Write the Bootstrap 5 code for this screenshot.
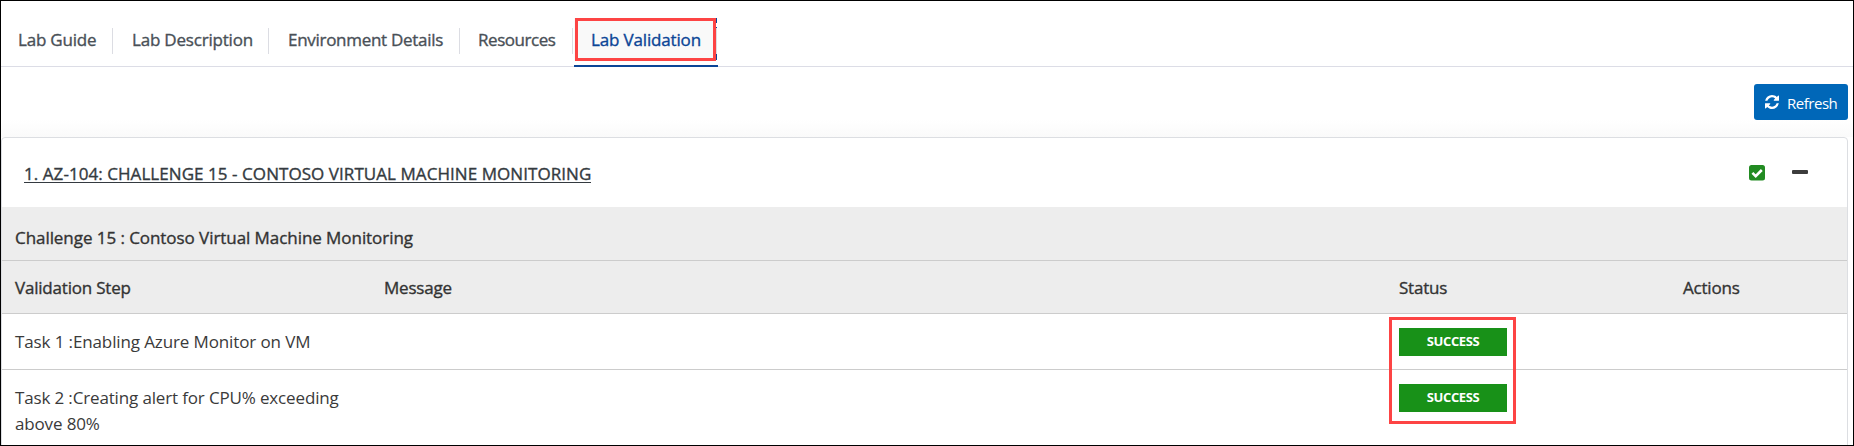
<!DOCTYPE html>
<html lang="en">
<head>
<meta charset="utf-8">
<meta name="viewport" content="width=device-width, initial-scale=1">
<title>Lab Validation</title>
<link href="https://cdn.jsdelivr.net/npm/bootstrap@5.3.0/dist/css/bootstrap.min.css" rel="stylesheet">
<style>
  body { height: 446px; overflow: hidden; border: 1px solid #000; background: #fff; color: #333;
    font: 400 17px/26px "Open Sans", "Noto Sans", sans-serif; letter-spacing: -.12px; }
  .semi { -webkit-text-stroke: .35px currentColor; }

  .lab-tabs { height: 66px; padding-top: 17px; border-bottom: 1px solid #dcdde6; color: #495057; }
  .lab-tabs .nav-item { height: 49px; }
  .lab-tabs .nav-link { height: 26px; margin-top: 10px; padding: 0; line-height: 24px; color: inherit; border-right: 1px solid #dcdde3; white-space: nowrap; }
  .t-guide { width: 112px; padding-left: 17px !important; letter-spacing: -.2px; }
  .t-desc { width: 156px; padding-left: 19px !important; letter-spacing: -.2px; }
  .t-env { width: 191px; padding-left: 19px !important; letter-spacing: -.29px; }
  .t-res { width: 113px; padding-left: 18px !important; letter-spacing: -.45px; }
  .lab-tabs .nav-item.current { width: 144px; margin-left: 1px; border-bottom: 2px solid #0b4596; color: #0b4596; }
  .current .nav-link { position: relative; height: 43px; width: 143px; margin: 0; padding: 10px 0 0 17px; border: 0; letter-spacing: -.16px; color: #0b4596;
    background: linear-gradient(#0b4596 5px, #fff 5px 9px, #0b4596 9px 10px, #dcdde3 10px 36px, #0b4596 36px 42px, #fff 42px) right / 1px 100% no-repeat, #f9f9f9; }
  .mark-box { position: absolute; border: 3px solid #fd4444; pointer-events: none; }
  .mark-tab { inset: 0 1px 0 1px; }

  .tool-row { height: 70px; padding: 17px 5px 0 0; background: linear-gradient(#fff 75%, #fafafa); }
  .btn-refresh { width: 94px; height: 36px; padding: 0 0 0 11px; border-radius: 3px; background: #0067b8 !important; color: #fff !important; font-size: 15px; line-height: 36px; letter-spacing: -.47px; border: 0; }
  .btn-refresh span { margin: 1px 0 0 8px; }

  .lab-card { width: 1847px; height: 320px; border: 1px solid #dcdee2; border-radius: 4px 4px 0 0; }
  .lab-card .card-header { flex: none; height: 69px; background: #fff; border: 0; padding: 1px 39px 0 22px; }
  .lab-title { color: #343a40; text-decoration: none; letter-spacing: .06px; height: 20px; line-height: 22px; border-bottom: 1px solid #343a40; margin-bottom: 1px; white-space: nowrap; }
  .minus { width: 16px; height: 4px; background: #3c3c3c; margin-left: 27px; margin-bottom: 2px; border-radius: 1px; }

  .steps { margin: 0; table-layout: fixed; color: #333; line-height: 26px; }
  .steps > :not(caption) > * > * { border-bottom: 1px solid #ccc; background: none; box-shadow: none; font-weight: 400; color: #333; padding: 15px 13px 0; vertical-align: top; }
  .steps .group th, .steps .heads th { background: #ededed; }
  .steps .group th { height: 53px; padding-top: 18px; letter-spacing: -.06px; }
  .steps .heads th { height: 53px; padding-top: 14px; letter-spacing: -.2px; }
  .steps .task td { height: 56px; color: #3a3a3a; }
  .steps .task td.status { padding-top: 14px; }
  .steps .task.last td { height: 90px; letter-spacing: -.15px; }
  .flag { width: 108px; height: 28px; border-radius: 0; background: #189118; font-size: 13px; font-weight: 700; line-height: 27px; letter-spacing: -.4px !important; padding: 0; display: block; }
  .mark-status { left: -10px; top: -11px; width: 127px; height: 107px; }
</style>
</head>
<body>
<ul class="nav flex-nowrap lab-tabs semi">
  <li class="nav-item"><a class="nav-link t-guide">Lab Guide</a></li>
  <li class="nav-item"><a class="nav-link t-desc">Lab Description</a></li>
  <li class="nav-item"><a class="nav-link t-env">Environment Details</a></li>
  <li class="nav-item"><a class="nav-link t-res">Resources</a></li>
  <li class="nav-item current"><a class="nav-link">Lab Validation<span class="mark-box mark-tab"></span></a></li>
</ul>

<div class="tool-row d-flex justify-content-end align-items-start">
  <button class="btn btn-refresh d-flex align-items-center" type="button">
    <svg width="14" height="14" viewBox="0 0 1536 1536" fill="currentColor" aria-hidden="true"><path d="M1511 928q0 5-1 7-64 268-268 434.500T764 1536q-146 0-282.500-55T238 1324l-129 129q-19 19-45 19t-45-19-19-45V960q0-26 19-45t45-19h448q26 0 45 19t19 45-19 45l-137 137q71 66 161 102t187 36q134 0 250-65t186-179q11-17 53-117 8-23 30-23h192q13 0 22.500 9.500t9.500 22.500zm25-800v448q0 26-19 45t-45 19h-448q-26 0-45-19t-19-45 19-45l138-138Q969 256 768 256q-134 0-250 65T332 500q-11 17-53 117-8 23-30 23H50q-13 0-22.500-9.500T18 608v-7q65-268 270-434.500T768 0q146 0 284 55.500T1297 212l130-129q19-19 45-19t45 19 19 45z"/></svg>
    <span>Refresh</span>
  </button>
</div>

<div class="card lab-card overflow-hidden">
  <div class="card-header d-flex align-items-center">
    <a class="lab-title semi me-auto">1. AZ-104: CHALLENGE 15 - CONTOSO VIRTUAL MACHINE MONITORING</a>
    <svg width="16" height="16" viewBox="0 0 16 16" aria-hidden="true"><rect width="16" height="15.500" rx="2.500" fill="#228b22"/><path d="M3.400 7.900l3.300 3.200 6.100-6.100" fill="none" stroke="#fff" stroke-width="2.600"/></svg>
    <span class="minus"></span>
  </div>
  <table class="table steps">
    <colgroup><col style="width:369px"><col style="width:1015px"><col style="width:284px"><col></colgroup>
    <thead class="semi">
      <tr class="group"><th colspan="4">Challenge 15 : Contoso Virtual Machine Monitoring</th></tr>
      <tr class="heads"><th>Validation Step</th><th>Message</th><th>Status</th><th>Actions</th></tr>
    </thead>
    <tbody class="border-0">
      <tr class="task"><td>Task 1 :Enabling Azure Monitor on VM</td><td></td>
        <td class="status"><div class="position-relative"><span class="badge flag">SUCCESS</span><span class="mark-box mark-status"></span></div></td><td></td></tr>
      <tr class="task last"><td>Task 2 :Creating alert for CPU% exceeding above 80%</td><td></td>
        <td class="status"><span class="badge flag">SUCCESS</span></td><td></td></tr>
    </tbody>
  </table>
</div>
</body>
</html>
